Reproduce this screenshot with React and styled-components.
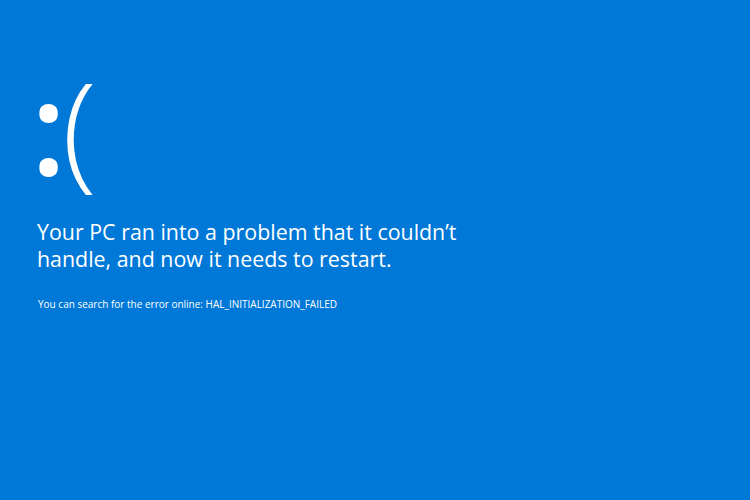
import styled, { createGlobalStyle } from "styled-components";

const GlobalStyle = createGlobalStyle`
    html, body {
        margin: 0;
        padding: 0;
        background: #0078d7;
    }
`;

const Screen = styled.div`
    width: 750px;
    height: 500px;
    background: #0078d7;
    color: #fff;
    font-family: "Open Sans", "Noto Sans", sans-serif;
    padding: 62px 0 0 37px;
    box-sizing: border-box;
    display: flex;
    flex-direction: column;
`;

const Face = styled.div`
    font-size: 128px;
    font-weight: 300;
    line-height: 1;
    height: 150px;
    display: flex;
    align-items: baseline;
`;

const Eyes = styled.span`
    font-weight: 600;
    margin-left: -6px;
    letter-spacing: -4px;
`;

const Message = styled.p`
    margin: 7px 0 0 0;
    font-size: 21.4px;
    font-weight: 400;
    line-height: 26.5px;
    max-width: 470px;
`;

const Info = styled.p`
    margin: 25px 0 0 1px;
    font-size: 10px;
    line-height: 14px;
`;

export default function App() {
    return (
        <>
            <GlobalStyle />
            <Screen>
                <Face>
                    <Eyes>:</Eyes>(
                </Face>
                <Message>
                    Your PC ran into a problem that it couldn’t
                    <br />
                    handle, and now it needs to restart.
                </Message>
                <Info>You can search for the error online: HAL_INITIALIZATION_FAILED</Info>
            </Screen>
        </>
    );
}
